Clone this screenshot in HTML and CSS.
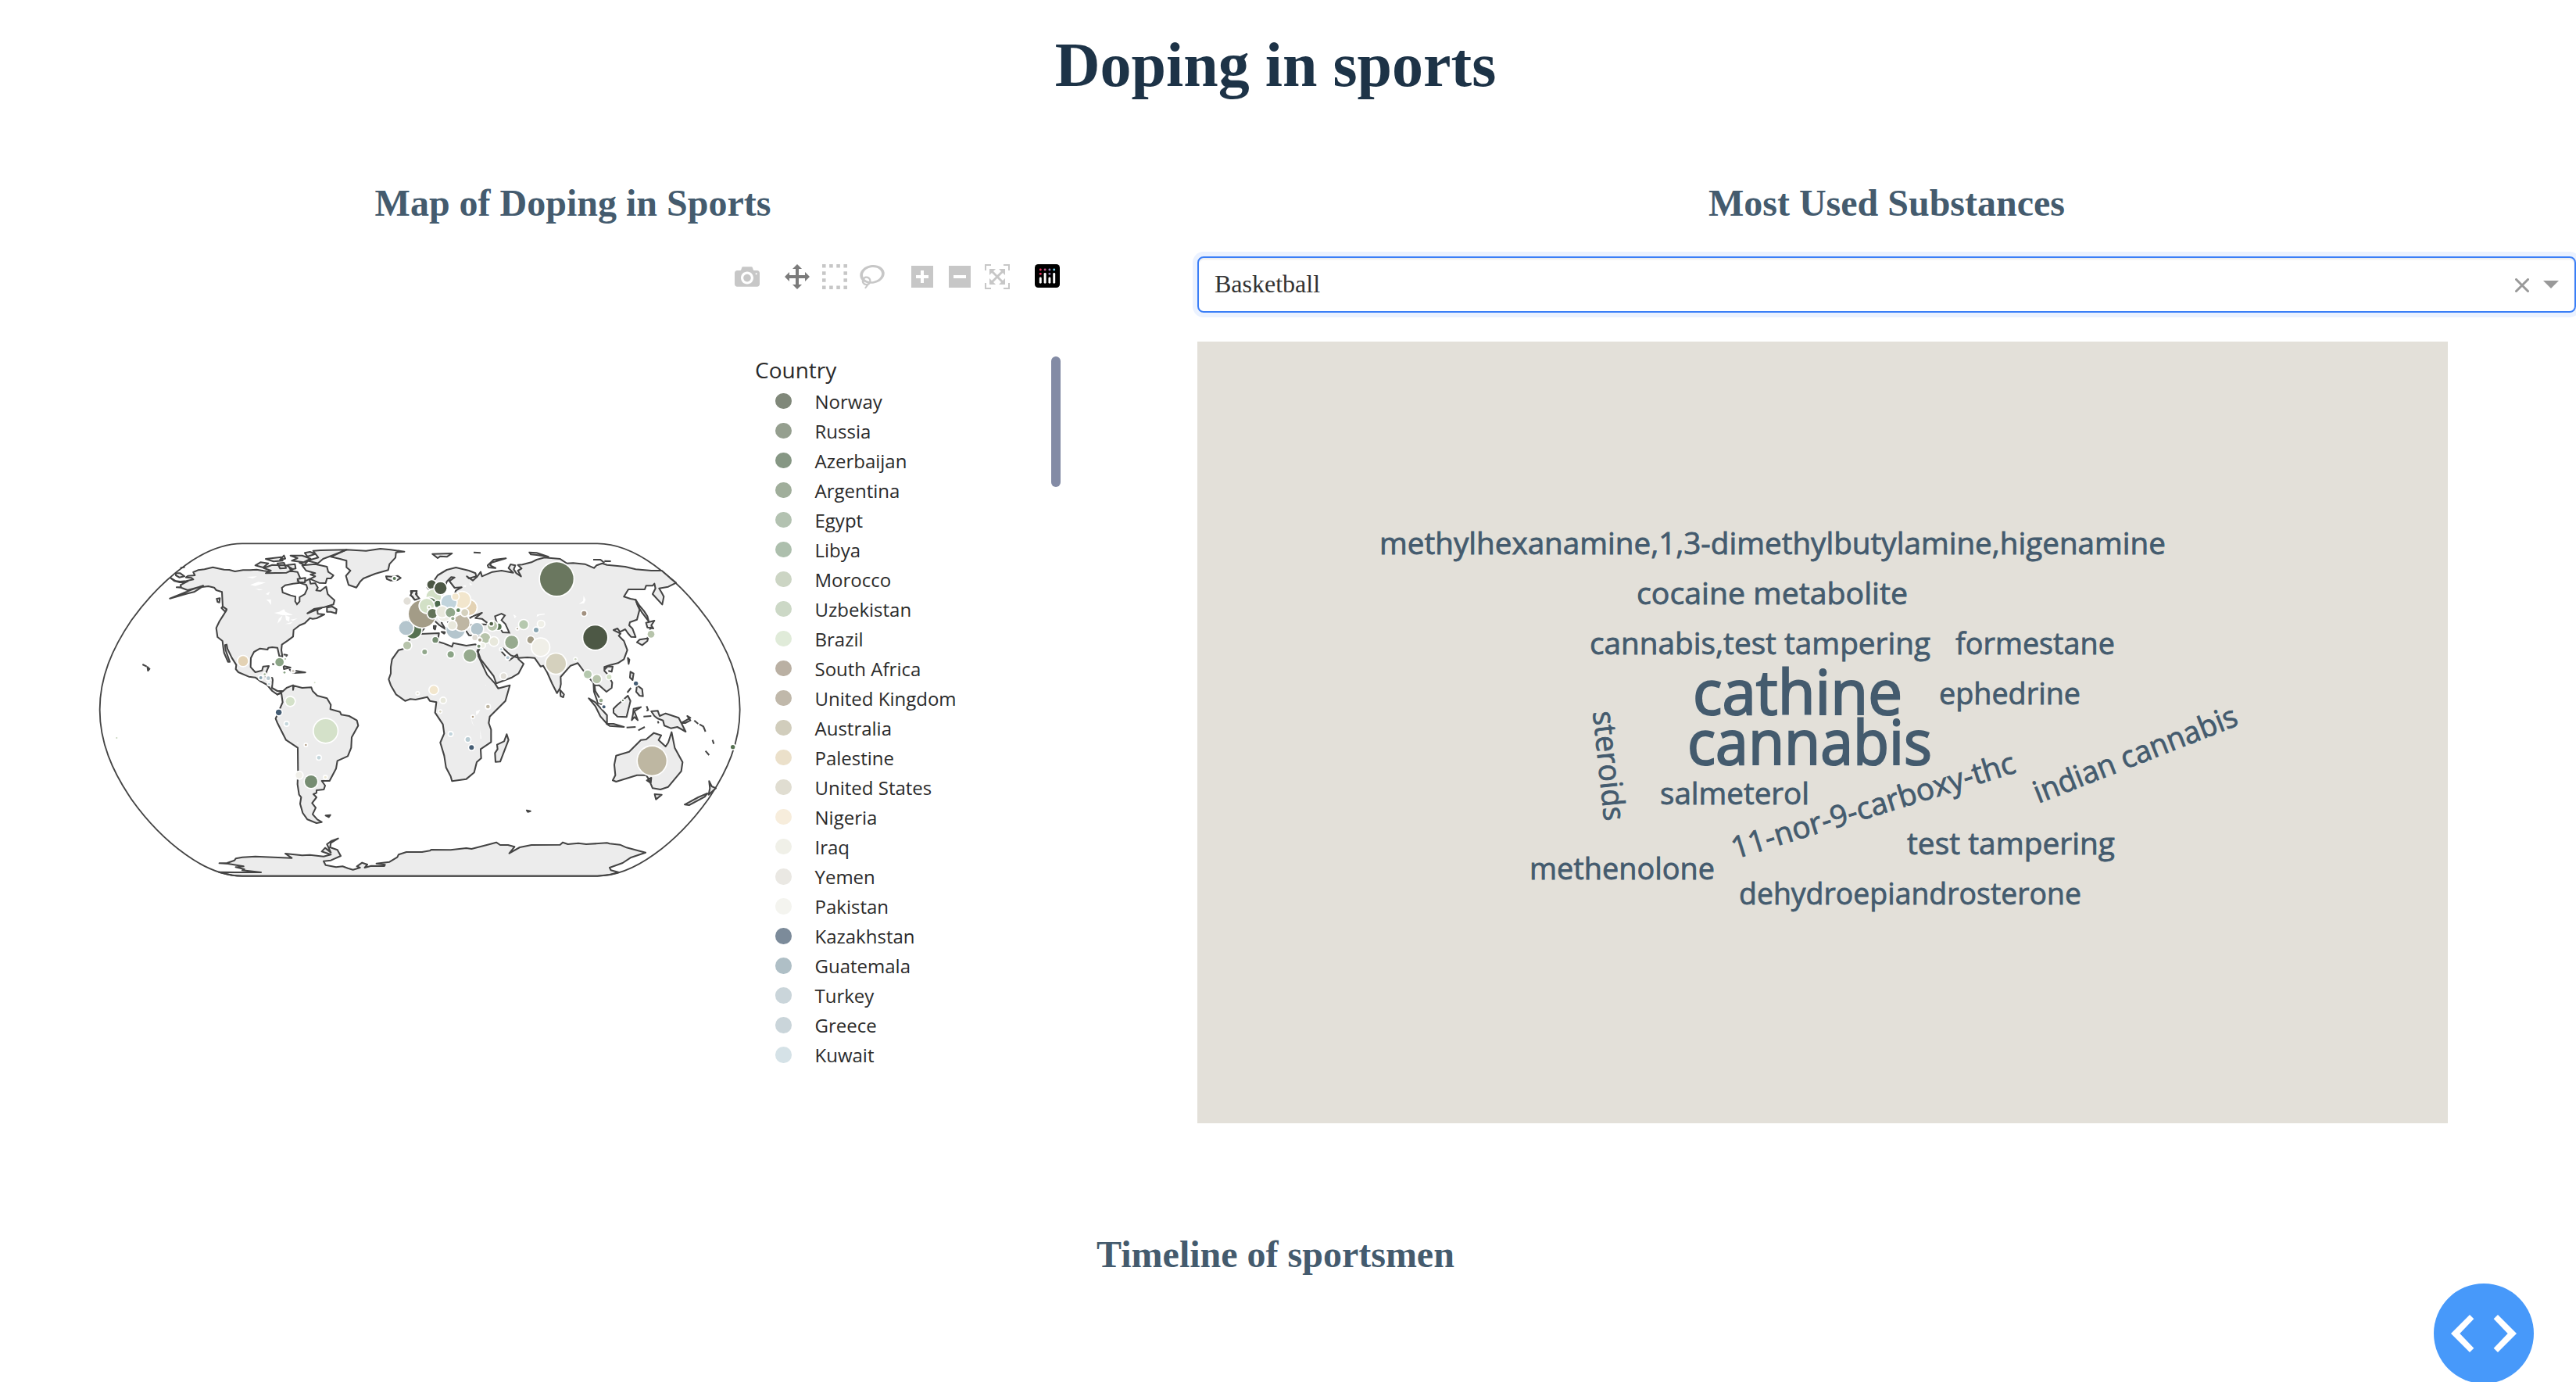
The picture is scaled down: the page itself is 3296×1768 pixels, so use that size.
FILE: index.html
```html
<!DOCTYPE html>
<html lang="en">
<head>
<meta charset="utf-8">
<title>Doping in sports</title>
<link rel="stylesheet" href="styles.css">
</head>
<body>
<h1>Doping in sports</h1>
<main class="columns">
  <section class="map-panel">
    <h2>Map of Doping in Sports</h2>
    <div class="modebar">
      <svg viewBox="0 0 1000 1000"><path transform="matrix(1 0 0 -1 0 850)" d="m500 450c-83 0-150-67-150-150 0-83 67-150 150-150 83 0 150 67 150 150 0 83-67 150-150 150z m400 150h-120c-16 0-34 13-39 29l-31 93c-6 15-23 28-40 28h-340c-16 0-34-13-39-28l-31-94c-6-15-23-28-40-28h-120c-55 0-100-45-100-100v-450c0-55 45-100 100-100h800c55 0 100 45 100 100v450c0 55-45 100-100 100z m-400-550c-138 0-250 112-250 250 0 138 112 250 250 250 138 0 250-112 250-250 0-138-112-250-250-250z m365 380c-19 0-35 16-35 35 0 19 16 35 35 35 19 0 35-16 35-35 0-19-16-35-35-35z"/></svg>
      <svg class="group active" viewBox="0 0 1000 1000"><path transform="matrix(1 0 0 -1 0 850)" d="m1000 350l-187 188 0-125-250 0 0 250 125 0-188 187-187-187 125 0 0-250-250 0 0 125-188-188 186-187 0 125 252 0 0-250-125 0 187-188 188 188-125 0 0 250 250 0 0-126 187 188z"/></svg>
      <svg viewBox="0 0 1000 1000"><path d="M0 0h143v143H0zM286 0h143v143H286zM571 0h143v143H571zM857 0h143v143H857zM0 286h143v143H0zM857 286h143v143H857zM0 571h143v143H0zM857 571h143v143H857zM0 857h143v143H0zM286 857h143v143H286zM571 857h143v143H571zM857 857h143v143H857z"/></svg>
      <svg viewBox="0 0 1031 1000"><path transform="matrix(1 0 0 -1 0 850)" d="m1018 538c-36 207-290 336-568 286-277-48-473-256-436-463 10-57 36-108 76-151-13-66 11-137 68-183 34-28 75-41 114-42l-55-70 0 0c-2-1-3-2-4-3-10-14-8-34 5-45 14-11 34-8 45 4 1 1 2 3 2 5l0 0 113 140c16 11 31 24 45 40 4 3 6 7 8 11 48-3 100 0 151 9 278 48 473 255 436 462z m-624-379c-80 14-149 48-197 96 42 42 109 47 156 9 33-26 47-66 41-105z m-187-74c-19 16-33 37-39 60 50-32 109-55 174-68-42-25-95-24-135 8z m360 75c-34-7-69-9-102-8 8 62-16 128-68 170-73 59-175 54-244-5-9 20-16 40-20 61-28 159 121 317 333 354s407-60 434-217c28-159-121-318-333-355z"/></svg>
      <svg class="group" viewBox="-62 0 1000 1000"><path transform="matrix(1 0 0 -1 0 850)" d="m1 787l0-875 875 0 0 875-875 0z m687-500l-187 0 0-187-125 0 0 187-188 0 0 125 188 0 0 187 125 0 0-187 187 0 0-125z"/></svg>
      <svg viewBox="-62 0 1000 1000"><path transform="matrix(1 0 0 -1 0 850)" d="m0 788l0-876 875 0 0 876-875 0z m688-500l-500 0 0 125 500 0 0-125z"/></svg>
      <svg viewBox="0 0 1000 1000"><path transform="matrix(1 0 0 -1 0 850)" d="m250 850l-187 0-63 0 0-62 0-188 63 0 0 188 187 0 0 62z m688 0l-188 0 0-62 188 0 0-188 62 0 0 188 0 62-62 0z m-875-938l0 188-63 0 0-188 0-62 63 0 187 0 0 62-187 0z m875 188l0-188-188 0 0-62 188 0 62 0 0 62 0 188-62 0z m-125 188l-1 0-93-94-156 156 156 156 92-93 2 0 0 250-250 0 0-2 93-92-156-156-156 156 94 92 0 2-250 0 0-250 0 0 93 93 157-156-157-156-93 94 0 0 0-250 250 0 0 0-94 93 156 157 156-157-93-93 0 0 250 0 0 250z"/></svg>
      <svg class="group" viewBox="0 0 132 132"><rect y="0" width="132" height="124" rx="18" fill="#000"/><g fill="#fff"><rect x="24" y="68" width="12" height="34" rx="6"/><rect x="48" y="45" width="12" height="57" rx="6"/><rect x="72" y="68" width="12" height="34" rx="6"/><rect x="96" y="45" width="12" height="57" rx="6"/></g><g fill="#ef3363"><circle cx="30" cy="29" r="6"/><circle cx="30" cy="51" r="6"/></g><circle cx="54" cy="29" r="6" fill="#c4588f"/><circle cx="78" cy="29" r="6" fill="#9a86bd"/><circle cx="78" cy="51" r="6" fill="#9a86bd"/><circle cx="102" cy="29" r="6" fill="#7fd5ee"/></svg>
    </div>
    <div class="plot">
      <svg class="map" viewBox="0 370 960 1067">
        <g transform="translate(110 680) scale(.33333)">
          <g class="land">
            <path d="M325 178L345 190L362 192L385 190L412 184L405 178L384 176L392 170L418 168L412 156L430 148L455 145L487 137L515 143L530 146L550 147L572 153L603 148L630 148L655 146L682 151L740 158L790 152L812 155L822 178L812 190L830 196L858 182L862 200L880 198L890 215L884 226L900 228L915 216L922 212L928 240L938 250L954 264L950 280L915 290L875 297L850 314L885 300L905 293L888 302L890 316L915 318L885 333L870 335L860 332L840 352L820 360L797 378L795 403L775 418L752 434L750 455L754 480L742 478L735 446L715 444L700 446L697 453L668 449L645 462L633 485L632 520L650 540L676 533L680 518L702 516L694 535L688 556L715 562L717 570L714 600L735 612L757 612L735 626L715 612L695 588L670 575L650 560L625 557L585 540L575 528L577 512L560 485L543 450L540 434L534 436L536 455L552 500L545 500L530 465L527 445L524 420L505 405L500 370L512 345L528 320L540 300L525 288L522 232L500 225L492 215L470 210L445 213L415 232L390 238L322 257L385 232L400 225L450 208L415 218L390 225L365 215L348 214L365 213L363 205L392 190L360 195L340 190Z"/>
            <path d="M757 612L770 600L795 590L795 608L798 592L830 600L865 598L870 612L888 630L925 640L940 665L938 682L975 692L980 703L1010 708L1040 725L1045 745L1020 790L1018 830L1005 862L965 880L960 910L935 957L905 957L918 975L913 990L885 993L885 1003L873 1008L885 1020L868 1042L882 1060L870 1085L888 1105L905 1115L885 1119L850 1105L832 1080L822 1045L826 1020L818 1010L812 970L814 920L813 830L768 800L735 735L728 718L740 690L755 655L750 620L735 625Z"/>
            <path d="M940 97L960 88L1000 70L1075 74L1130 66L1170 70L1222 77L1190 80L1188 100L1165 125L1160 148L1110 162L1065 180L1052 193L1038 215L1008 205L998 170L1015 150L1000 137L1000 112L975 105Z"/>
            <path d="M650 130L670 118L700 122L680 138ZM682 140L715 128L770 130L795 145L770 158L690 160L710 150ZM690 105L750 98L755 112L720 115ZM785 92L830 92L862 104L835 118L790 112L812 102ZM840 82L860 78L880 86L850 96ZM872 74L900 72L1000 70L950 90L910 105L890 122L850 112L892 100ZM830 130L880 125L925 135L930 155L950 168L940 180L925 180L920 198L895 197L860 182L880 172L862 165L880 160L845 150ZM735 122L760 120L768 140L745 142ZM775 128L802 125L805 142L785 146ZM812 182L842 178L840 196L818 194ZM760 92L765 104L745 108ZM820 120L850 115L838 128Z"/>
            <path d="M925 292L945 288L962 298L960 314L940 308L925 308ZM502 258L514 256L512 272L505 270ZM525 288L540 298L535 308L520 293ZM758 516L785 522L760 528ZM782 530L842 541L795 543ZM755 540L768 541M758 472L772 474L768 480M715 508L722 510M217 510L233 518M236 520L244 527L238 534ZM920 1090L938 1088L932 1096ZM1152 172L1175 173L1196 170L1208 178L1196 186L1170 188L1155 182ZM362 140L380 136M345 160L362 160L378 172L358 176L345 168ZM1247 228L1268 228L1270 240L1262 248L1280 265L1262 262L1250 248Z"/>
            <path d="M510 1307L575 1308L672 1308L600 1300L608 1296L575 1288L605 1285L545 1275L512 1273L542 1272L570 1262L575 1255L600 1250L650 1247L720 1250L790 1253L765 1236L830 1243L860 1241L912 1247L940 1240L905 1228L918 1214L940 1232L925 1200L943 1187L968 1178L940 1195L937 1212L965 1222L978 1245L940 1262L912 1265L920 1280L960 1288L985 1285L1005 1292L1025 1298L1052 1290L1040 1285L1060 1271L1080 1278L1070 1290L1095 1283L1145 1284L1148 1279L1115 1274L1165 1268L1195 1250L1200 1240L1230 1230L1290 1230L1320 1225L1325 1221L1400 1222L1460 1215L1480 1218L1550 1200L1575 1193L1590 1203L1620 1203L1645 1210L1625 1235L1665 1212L1710 1203L1820 1202L1830 1193L1850 1200L1890 1196L1920 1200L2000 1195L2010 1198L2050 1202L2075 1213L2148 1232L2090 1252L2060 1272L2010 1290L2015 1300L2045 1308L2010 1317L1963 1322L600 1322L560 1319Z"/>
          </g>
          <path class="frame" d="M600 46C520 46 450 80 383 128C290 195 225 270 175 340C100 450 53 560 53 684C53 808 100 918 175 1028C225 1098 290 1173 383 1240C450 1288 520 1322 600 1322L1963 1322C2043 1322 2113 1288 2180 1240C2273 1173 2338 1098 2388 1028C2463 918 2510 808 2510 684C2510 560 2463 450 2388 340C2338 270 2273 195 2180 128C2113 80 2043 46 1963 46Z"/>
          <path class="sea" d="M752 216L765 206L795 200L820 197L846 205L850 218L840 240L820 252L820 268L810 279L803 268L804 250L785 245L755 234Z"/>
          <path class="lake" d="M617 174L657 172L640 180ZM630 205L662 193L690 196L650 209ZM650 220L680 222L665 226ZM690 240L706 230L700 244ZM692 262L710 260L711 282L700 268ZM722 312L742 308L760 298L766 308L795 320L770 322L750 320ZM735 353L740 335L755 322L748 340ZM765 322L782 328L780 346L768 340ZM765 355L795 346L785 355ZM785 338L812 333L795 343ZM808 806L818 814L812 814Z"/>
          <g class="bubbles">
            <circle cx="1184" cy="180" r="6" fill="#567654"/>
            <circle cx="603" cy="497" r="19" fill="#e3d2b4"/>
            <circle cx="743" cy="501" r="16" fill="#8ba486"/>
            <circle cx="762" cy="541" r="4" fill="#8ba486"/><circle cx="765" cy="489" r="3" fill="#a9bba1"/><circle cx="795" cy="535" r="5" fill="#d2ccc4"/>
            <circle cx="686" cy="548" r="4" fill="#a9bba1"/><circle cx="671" cy="561" r="6" fill="#8aa6b3"/><circle cx="700" cy="563" r="7" fill="#b7c8cf"/><circle cx="703" cy="585" r="4" fill="#c4d6db"/>
            <circle cx="878" cy="580" r="3" fill="#d5e0c9"/><circle cx="118" cy="792" r="3" fill="#c5d3ba"/>
            <circle cx="784" cy="652" r="17" fill="#d4e1c9"/><circle cx="740" cy="694" r="11" fill="#445c73"/>
            <circle cx="770" cy="738" r="7" fill="#c4d6db"/><circle cx="920" cy="765" r="45" fill="#d4e1c9"/>
            <circle cx="844" cy="819" r="4" fill="#b5a38f"/><circle cx="894" cy="868" r="7" fill="#c4d6db"/>
            <circle cx="818" cy="935" r="13" fill="#f0efe9"/><circle cx="919" cy="943" r="5" fill="#eeead7"/><circle cx="864" cy="960" r="24" fill="#768d72"/>
          </g>
        </g>
        <g transform="translate(500 680) scale(.33333)">
          <g class="land">
            <path d="M140 215L165 190L180 168L215 147L250 138L300 150L325 160L328 172L300 180L292 172L315 188L330 175L345 155L350 172L390 155L425 150L470 158L452 140L460 126L478 130L472 145L482 160L500 172L488 150L502 142L488 128L505 127L540 118L560 108L590 100L650 105L675 122L700 121L745 125L780 140L790 130L812 122L830 128L870 132L900 135L940 145L1000 150L1040 150L1072 178L1095 197L1065 212L1030 218L1040 235L1048 250L1042 280L1005 240L1016 218L1012 200L1005 208L980 208L975 222L912 222L895 250L920 258L940 262L955 300L945 338L918 348L915 360L928 373L940 405L922 404L910 390L900 375L880 385L870 372L855 378L882 392L875 400L895 420L908 455L895 490L872 505L840 513L820 520L820 535L830 545L850 580L848 600L828 615L800 590L782 590L785 612L805 645L808 662L795 658L780 615L778 580L755 555L718 505L690 515L652 558L653 585L650 600L638 620L620 585L600 540L585 515L575 518L552 485L525 483L490 485L460 475L430 447L425 460L455 494L485 472L490 490L510 508L490 545L465 560L405 583L395 555L345 490L335 462L345 440L355 415L345 400L300 398L285 375L300 360L330 355L380 358L350 335L325 332L350 312L315 325L290 340L270 385L240 365L205 335L195 350L210 375L185 358L165 340L130 370L105 400L60 400L45 345L90 340L100 300L150 265L165 240L190 262L245 240L250 226L272 214L245 216L225 190L245 176L232 175L215 192L200 240L170 250L140 215Z"/>
            <path d="M30 455L5 490L0 520L0 545L-8 567L0 590L20 625L55 650L75 643L95 645L140 635L150 650L175 655L170 695L200 740L205 775L190 810L205 860L212 905L230 940L235 958L290 950L320 925L330 885L347 870L345 835L385 808L385 760L376 735L380 710L440 650L457 590L412 602L400 583L370 550L330 465L340 440L325 433L290 438L240 428L235 442L200 428L180 422L185 390L115 393L75 410L50 450Z"/>
            <path d="M445 778L452 800L420 883L402 884L400 850L410 835L408 818L435 805ZM650 608L665 625L662 636L652 632ZM760 640L785 655L830 705L830 738L805 710L785 670ZM828 738L855 738L895 750L840 746ZM855 680L865 670L910 630L920 650L905 712L870 710L855 695ZM932 680L960 674L935 690L948 724L935 712L925 724L930 700ZM982 670L988 685L982 688M970 710L1000 708M905 752L940 750M950 763L975 750M1000 690L1025 688L1032 708L1055 698L1105 715L1132 768L1100 750L1075 755L1050 745L1045 725L1025 718L1012 708ZM1115 735L1150 715L1138 708L1150 725L1130 735ZM1165 725L1180 738M1185 740L1200 748L1208 768M1235 800L1240 815M1208 842L1222 858M1025 728L1028 736"/>
            <path d="M1078 770L1090 830L1120 885L1115 920L1065 980L1035 990L1005 985L990 950L980 935L945 935L865 960L852 955L862 935L858 895L865 860L915 845L960 800L980 798L1010 773L1038 782L1028 800L1055 825L1065 810ZM983 955L1000 945L998 965ZM1013 1008L1040 1010L1018 1028ZM1222 958L1232 978L1248 985L1220 1010L1225 985ZM1215 1005L1180 1020L1128 1048L1145 1050L1205 1018ZM522 1070L536 1073L526 1076Z"/>
            <path d="M940 262L955 285L972 305L985 325L990 345L965 312L948 285ZM980 350L1012 342L1000 360L1008 372L985 368ZM998 368L985 410L955 415L945 425L965 436L985 420ZM910 485L916 492L913 508ZM820 530L832 518L852 518L848 538L835 535M920 538L932 545L928 570L918 560ZM945 590L965 605L968 632L955 630L942 615ZM908 618L922 600M372 130L395 108L442 103L385 120L382 130L402 140L375 138ZM160 86L235 84L215 97L190 95L180 102ZM318 80L345 82M532 80L560 82L605 97L560 90L538 88ZM777 108L805 108L820 120M820 113L845 114M75 245L85 228L100 228L96 240L110 258L92 262L82 248ZM165 362L173 362L170 376L165 372ZM195 385L210 386L205 392Z"/>
          </g>
          <path class="sea" d="M400 325L425 315L438 322L425 340L440 355L455 388L430 387L418 370L405 345Z"/>
          <path class="lake" d="M740 246L748 262L742 275L722 278L738 266ZM562 318L592 315L590 319L570 322L560 328ZM470 318L482 325L476 334ZM327 690L343 683L338 695L328 706ZM308 708L314 735L322 750L312 735ZM343 758L348 795L344 795ZM276 208L290 206L286 214ZM302 196L314 205L304 206ZM362 588L366 589L364 592Z"/>
          <g class="bubbles">
            <circle cx="63" cy="267" r="14" fill="#e2dfd8"/><circle cx="157" cy="204" r="17" fill="#4c5744"/><circle cx="165" cy="250" r="28" fill="#d2e0c6"/><circle cx="191" cy="217" r="23" fill="#4d5845"/>
            <circle cx="85" cy="378" r="32" fill="#567252"/><circle cx="59" cy="370" r="27" fill="#b4c5cd"/>
            <circle cx="249" cy="376" r="35" fill="#b4c5cd"/><circle cx="150" cy="280" r="26" fill="#567252"/>
            <circle cx="121" cy="316" r="52" fill="#a39c87"/><circle cx="180" cy="278" r="12" fill="#4d6b4d"/><circle cx="138" cy="285" r="27" fill="#d2e0c6"/><circle cx="147" cy="291" r="4" fill="#bec9ae"/>
            <circle cx="300" cy="292" r="29" fill="#e3d2b4"/><circle cx="274" cy="263" r="31" fill="#f2e6cd"/><circle cx="223" cy="272" r="29" fill="#c1d4dc"/><circle cx="248" cy="250" r="12" fill="#f2e6cd"/>
            <circle cx="205" cy="320" r="24" fill="#efefe7"/><circle cx="160" cy="315" r="18" fill="#647459"/><circle cx="197" cy="308" r="21" fill="#e8e8dc"/>
            <circle cx="272" cy="350" r="30" fill="#beb6a3"/><circle cx="259" cy="302" r="7" fill="#63845f"/><circle cx="229" cy="311" r="18" fill="#91a78b"/><circle cx="284" cy="311" r="13" fill="#d5d1be"/><circle cx="238" cy="334" r="6" fill="#96aa8e"/><circle cx="236" cy="360" r="16" fill="#e8e8dc"/>
            <circle cx="331" cy="374" r="23" fill="#b4c5cd"/><circle cx="413" cy="365" r="12" fill="#567252"/><circle cx="390" cy="362" r="18" fill="#b7c4ab"/><circle cx="386" cy="354" r="7" fill="#506047"/>
            <circle cx="362" cy="409" r="19" fill="#b7c4ab"/><circle cx="396" cy="422" r="16" fill="#e8e8dc"/><circle cx="323" cy="407" r="10" fill="#e0dcd5"/><circle cx="342" cy="416" r="6" fill="#a39c87"/><circle cx="352" cy="437" r="9" fill="#efefe7"/><circle cx="338" cy="440" r="6" fill="#768d72"/>
            <circle cx="171" cy="416" r="11" fill="#768d72"/><circle cx="63" cy="437" r="15" fill="#b7c4ab"/><circle cx="130" cy="462" r="9" fill="#91a78b"/><circle cx="230" cy="472" r="12" fill="#8ba486"/><circle cx="304" cy="476" r="24" fill="#96aa8e"/>
            <circle cx="464" cy="425" r="25" fill="#96aa8e"/><circle cx="424" cy="452" r="4" fill="#c1d4dc"/><circle cx="449" cy="484" r="6" fill="#b4c5d0"/><circle cx="433" cy="555" r="11" fill="#e2dfd8"/>
            <circle cx="510" cy="357" r="17" fill="#b5c8ae"/><circle cx="486" cy="373" r="3" fill="#a99c8c"/><circle cx="577" cy="355" r="12" fill="#efefe7"/><circle cx="558" cy="378" r="9" fill="#8aa6b3"/><circle cx="537" cy="416" r="13" fill="#a39c87"/><circle cx="575" cy="444" r="33" fill="#f0efe8"/>
            <circle cx="637" cy="182" r="64" fill="#6a775f"/><circle cx="742" cy="314" r="9" fill="#a29180"/><circle cx="785" cy="407" r="46" fill="#4d5845"/><circle cx="634" cy="507" r="38" fill="#d5d1be"/><circle cx="709" cy="490" r="4" fill="#ccd5c0"/>
            <circle cx="756" cy="548" r="15" fill="#b5c8ae"/><circle cx="791" cy="566" r="16" fill="#b7c4ab"/><circle cx="838" cy="558" r="9" fill="#d2e0c6"/><circle cx="999" cy="394" r="13" fill="#b7c4ab"/>
            <circle cx="941" cy="583" r="8" fill="#445c73"/><circle cx="807" cy="648" r="7" fill="#96aa8e"/><circle cx="818" cy="673" r="6" fill="#445c73"/><circle cx="891" cy="648" r="3" fill="#567252"/>
            <circle cx="165" cy="608" r="16" fill="#f2e6cd"/><circle cx="103" cy="621" r="4" fill="#e0dcd0"/><circle cx="201" cy="648" r="10" fill="#e8e8dc"/><circle cx="190" cy="691" r="4" fill="#d5d1be"/><circle cx="373" cy="672" r="7" fill="#beb6a3"/><circle cx="315" cy="711" r="4" fill="#b5a38f"/>
            <circle cx="230" cy="777" r="7" fill="#c1d4dc"/><circle cx="296" cy="798" r="9" fill="#b9ccd3"/><circle cx="310" cy="829" r="9" fill="#445c73"/>
            <circle cx="1003" cy="880" r="55" fill="#beb7a2"/><circle cx="1313" cy="827" r="8" fill="#567252"/>
          </g>
        </g>
      </svg>
      <div class="legend">
        <div class="legend-body">
          <div class="legend-title">Country</div>
          <ul>
            <li><i style="background:#80887a"></i><span>Norway</span></li>
            <li><i style="background:#959f8f"></i><span>Russia</span></li>
            <li><i style="background:#869784"></i><span>Azerbaijan</span></li>
            <li><i style="background:#a0ae9b"></i><span>Argentina</span></li>
            <li><i style="background:#b3c2b1"></i><span>Egypt</span></li>
            <li><i style="background:#adbfad"></i><span>Libya</span></li>
            <li><i style="background:#ccd5c4"></i><span>Morocco</span></li>
            <li><i style="background:#ccd8c6"></i><span>Uzbekistan</span></li>
            <li><i style="background:#e0ebd9"></i><span>Brazil</span></li>
            <li><i style="background:#bab0a3"></i><span>South Africa</span></li>
            <li><i style="background:#c0b8aa"></i><span>United Kingdom</span></li>
            <li><i style="background:#d1cdbc"></i><span>Australia</span></li>
            <li><i style="background:#ebe0ca"></i><span>Palestine</span></li>
            <li><i style="background:#e0ddd1"></i><span>United States</span></li>
            <li><i style="background:#f7eddc"></i><span>Nigeria</span></li>
            <li><i style="background:#f0f0e8"></i><span>Iraq</span></li>
            <li><i style="background:#eae8e3"></i><span>Yemen</span></li>
            <li><i style="background:#f4f4ef"></i><span>Pakistan</span></li>
            <li><i style="background:#7c8b9a"></i><span>Kazakhstan</span></li>
            <li><i style="background:#afbfc6"></i><span>Guatemala</span></li>
            <li><i style="background:#cad5da"></i><span>Turkey</span></li>
            <li><i style="background:#cad5da"></i><span>Greece</span></li>
            <li><i style="background:#d5e2e7"></i><span>Kuwait</span></li>
          </ul>
        </div>
        <div class="scrollbar"></div>
      </div>
    </div>
  </section>
  <section class="cloud-panel">
    <h2>Most Used Substances</h2>
    <div class="select">
      <span>Basketball</span>
      <svg class="clear" viewBox="0 0 18 18"><path d="M1.5 1.5L16.5 16.5M16.5 1.5L1.5 16.5"/></svg>
      <div class="arrow"></div>
    </div>
    <svg class="cloud" viewBox="1532 437 1600 1000">
      <g class="small">
        <text x="1765" y="708.5" textLength="1006" lengthAdjust="spacingAndGlyphs">methylhexanamine,1,3-dimethylbutylamine,higenamine</text>
        <text x="2094" y="772.5" textLength="347" lengthAdjust="spacingAndGlyphs">cocaine metabolite</text>
        <text x="2034" y="836.5" textLength="436" lengthAdjust="spacingAndGlyphs">cannabis,test tampering</text>
        <text x="2502" y="836.5" textLength="204" lengthAdjust="spacingAndGlyphs">formestane</text>
        <text x="2481" y="900.5" textLength="181" lengthAdjust="spacingAndGlyphs">ephedrine</text>
        <text x="2124" y="1028.5" textLength="191" lengthAdjust="spacingAndGlyphs">salmeterol</text>
        <text x="1957" y="1124.5" textLength="237" lengthAdjust="spacingAndGlyphs">methenolone</text>
        <text x="2440" y="1092.5" textLength="266" lengthAdjust="spacingAndGlyphs">test tampering</text>
        <text x="2225" y="1156.5" textLength="438" lengthAdjust="spacingAndGlyphs">dehydroepiandrosterone</text>
        <text transform="translate(2608 1028) rotate(-21.4)" textLength="277" lengthAdjust="spacingAndGlyphs">indian cannabis</text>
        <text transform="translate(2220 1099) rotate(-17.1)" textLength="378" lengthAdjust="spacingAndGlyphs">11-nor-9-carboxy-thc</text>
        <text transform="translate(2038 911) rotate(84)" textLength="141" lengthAdjust="spacingAndGlyphs">steroids</text>
      </g>
      <g class="big">
        <text x="2166" y="914" textLength="268" lengthAdjust="spacingAndGlyphs">cathine</text>
        <text x="2159" y="978" textLength="313" lengthAdjust="spacingAndGlyphs">cannabis</text>
      </g>
    </svg>
  </section>
</main>
<h2 class="timeline">Timeline of sportsmen</h2>
<button class="debug" aria-label="Toggle debug menu"><svg viewBox="0 0 384 384"><path d="M138 120L154 136L100 192L154 248L138 264L66 192ZM246 120L230 136L284 192L230 248L246 264L318 192Z"/></svg></button>
</body>
</html>
```
FILE: styles.css
```css
body {
  margin: 0;
  width: 3296px;
  height: 1768px;
  overflow: hidden;
  background: #fff;
  font-family: "Liberation Serif", "Times New Roman", serif;
}

h1 {
  width: 3264px;
  margin: 0;
  padding-top: 37px;
  color: #1d3347;
  font-size: 80px;
  line-height: 92px;
  text-align: center;
}

h2 {
  margin: 0;
  color: #445b6e;
  font-size: 48px;
  line-height: 55px;
  text-align: center;
}

.columns {
  display: grid;
  grid-template-columns: 1466px 1764px;
  column-gap: 66px;
  height: 1205px;
  padding-top: 103px;
}

.modebar {
  display: flex;
  gap: 16px;
  margin-top: 51px;
  padding-left: 940px;
}

.modebar svg {
  width: 32px;
  height: 32px;
  fill: #c7c7c7;
}

.modebar .group { margin-left: 16px; }
.modebar .active { fill: #7b7b7b; }

.plot {
  display: flex;
  align-items: flex-start;
}

.map {
  flex: none;
  width: 960px;
  height: 1067px;
}

.land path {
  fill: #ececec;
  stroke: #444;
  stroke-width: 6.2;
  stroke-linejoin: round;
}

.frame { fill: none; stroke: #444; stroke-width: 5.5; }
.sea { fill: #fff; stroke: #444; stroke-width: 6; }
.lake { fill: #fff; }

.bubbles circle {
  stroke: #fff;
  stroke-width: 10;
  paint-order: stroke;
}

.legend {
  display: flex;
  justify-content: space-between;
  width: 397px;
  margin-top: 86px;
  color: #2a2a2a;
  font-family: "Open Sans", sans-serif;
}

.legend-title {
  padding-left: 6px;
  font-size: 28px;
  line-height: 34px;
  height: 38px;
}

.legend ul {
  margin: 0;
  padding: 0;
  list-style: none;
}

.legend li {
  display: flex;
  align-items: center;
  gap: 30px;
  height: 38.03px;
  padding-left: 32px;
  font-size: 24px;
  line-height: 38px;
  white-space: nowrap;
}

.legend li span { padding-top: 2px; }

.legend i {
  width: 20.5px;
  height: 20.5px;
  border-radius: 50%;
}

.scrollbar {
  width: 12px;
  height: 167px;
  border-radius: 6px;
  background: #838ba5;
}

.select {
  display: flex;
  align-items: center;
  box-sizing: border-box;
  height: 72px;
  margin-top: 41px;
  padding: 0 20px 1px;
  border: 2px solid #3a7ef7;
  border-radius: 8px;
  box-shadow: inset 0 2px 2px rgba(0, 0, 0, .075), 0 0 0 6px #ebf2ff;
  color: #333;
  font-size: 32px;
}

.clear {
  width: 18px;
  height: 18px;
  margin: 2px 18px 0 auto;
  fill: none;
  stroke: #999;
  stroke-width: 3;
  stroke-linecap: round;
}

.arrow {
  border: 10px solid transparent;
  border-top-color: #999;
  border-bottom: 0;
}

.cloud {
  display: block;
  width: 1600px;
  height: 1000px;
  margin-top: 37px;
  background: #e3e0d9;
  fill: #445b6e;
  stroke: #445b6e;
  font-family: "Open Sans", sans-serif;
}

.small { font-size: 39px; stroke-width: .8; }
.big { font-size: 78px; stroke-width: 2.2; }

.timeline {
  width: 3264px;
  padding-top: 140px;
}

.debug {
  position: fixed;
  left: 3114px;
  top: 1642px;
  width: 128px;
  height: 128px;
  padding: 0;
  border: 0;
  border-radius: 50%;
  background: #4799fa;
}

.debug svg {
  display: block;
  width: 128px;
  height: 128px;
  fill: #fff;
}
```
